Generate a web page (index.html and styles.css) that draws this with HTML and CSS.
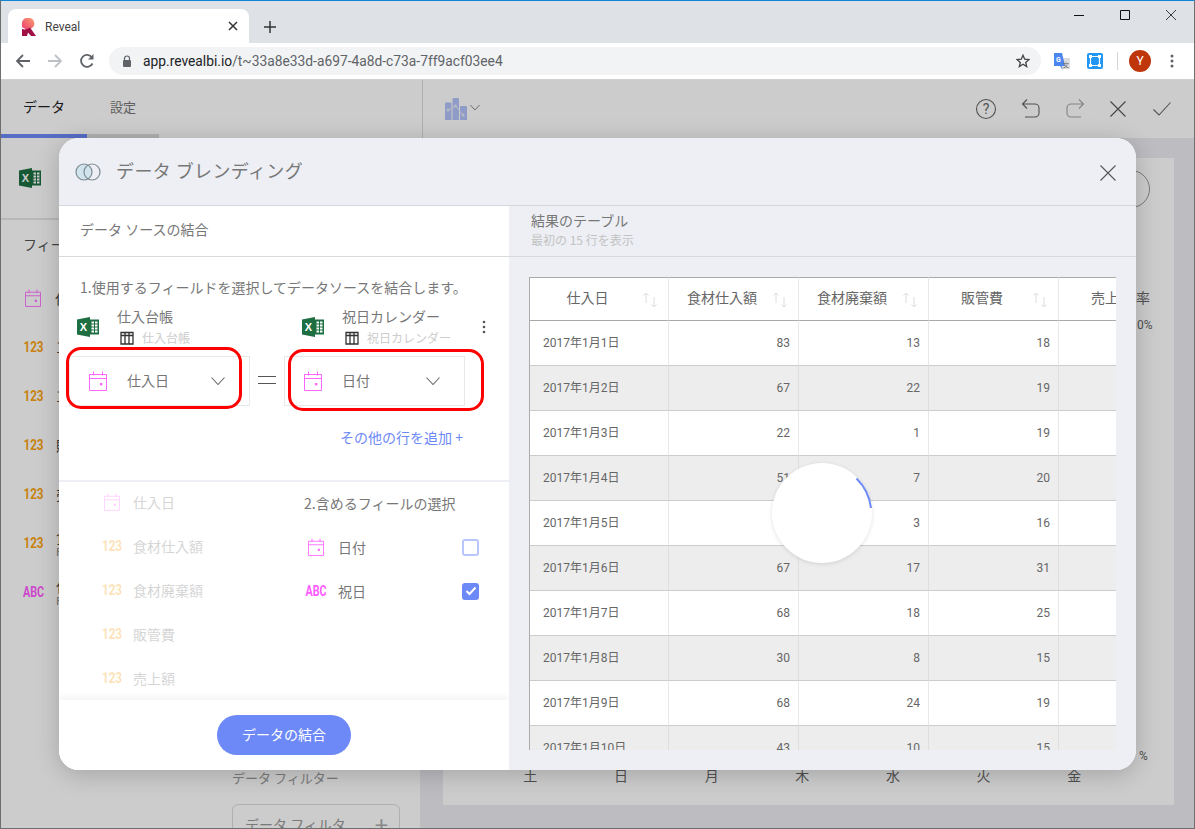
FILE: index.html
```html
<!DOCTYPE html>
<html lang="ja">
<head>
    <meta charset="UTF-8">
    <meta name="viewport" content="width=device-width, initial-scale=1.0">
    <title>Reveal</title>
    <link rel="stylesheet" href="styles.css">
</head>
<body>
    <svg class="sprites" width="0" height="0">
        <defs>
            <linearGradient id="faviconTop" x1="1" y1="0" x2="0" y2="1">
                <stop offset="0" stop-color="#f9a06e"/>
                <stop offset="1" stop-color="#ee3b72"/>
            </linearGradient>
        </defs>
        <symbol id="calendar" viewBox="0 0 18 20">
            <path d="M.5 3.5h17v16H.5zM.5 7.5h17M4.5 .5v4M13.5 .5v4" fill="none" stroke="currentColor"/>
            <rect x="11" y="12" width="2.4" height="2.4" fill="currentColor"/>
        </symbol>
        <symbol id="excel" viewBox="0 0 22 20">
            <path d="M0 2.5 13 0v20L0 17.5z" fill="#1d6f42"/>
            <path d="M13 2.5h9v15h-9z" fill="#1d6f42"/>
            <path d="M14.5 4.5H17v2h-2.5zM18 4.5h2.5v2H18zM14.5 7.5H17v2h-2.5zM18 7.5h2.5v2H18zM14.5 10.5H17v2h-2.5zM18 10.5h2.5v2H18zM14.5 13.500H17v2h-2.5zM18 13.5h2.5v2H18z" fill="#fff"/>
            <text x="6.4" y="14" text-anchor="middle" class="excel-x">X</text>
        </symbol>
        <symbol id="tablegrid" viewBox="0 0 14 14">
            <path d="M1 1.5h12V13H1zM1 4.5h12M5 1.5V13M9 1.5V13" fill="none" stroke="#333" stroke-width="1.3"/>
        </symbol>
        <symbol id="sort" viewBox="0 0 16 16">
            <path d="M4 11V1M1.5 3.5 4 1l2.500 2.500M12 5v10M9.500 12.500 12 15l2.500-2.500" fill="none" stroke="#dedede"/>
        </symbol>
        <symbol id="chevron" viewBox="0 0 14 10">
            <path d="M.5 1.5 7 8.5l6.500-7" fill="none" stroke="#666" stroke-width="1.1"/>
        </symbol>
    </svg>

    <div class="window">
        <div class="tabstrip">
            <div class="tab">
                <svg class="favicon" width="14" height="18" viewBox="0 0 14 18">
                    <path d="M0 9V5a5 5 0 0 1 5-5h2a5.500 5.500 0 0 1 3 10L5 12z" fill="url(#faviconTop)"/>
                    <path d="M0 18v-7c3 1 6 0 8-1.500L14 18H9l-3-3.500L5 18z" fill="#a01046"/>
                </svg>
                <span class="tab-title">Reveal</span>
                <svg class="tab-close" width="10" height="10" viewBox="0 0 10 10">
                    <path d="M1 1l8 8M9 1 1 9" stroke="#333" stroke-width="1.5"/>
                </svg>
            </div>
            <svg class="new-tab" width="12" height="12" viewBox="0 0 12 12">
                <path d="M6 0v12M0 6h12" stroke="#333" stroke-width="1.5"/>
            </svg>
            <div class="window-controls">
                <svg width="10" height="10" viewBox="0 0 10 10"><path d="M0 5.5h10" stroke="#111"/></svg>
                <svg width="10" height="10" viewBox="0 0 10 10"><path d="M.5 .5h9v9h-9z" fill="none" stroke="#111"/></svg>
                <svg width="10" height="10" viewBox="0 0 10 10"><path d="M0 0l10 10M10 0 0 10" stroke="#111" stroke-width=".8"/></svg>
            </div>
        </div>

        <div class="toolbar">
            <svg class="nav-btn" width="16" height="16" viewBox="0 0 16 16">
                <path d="M15 8H2M8 2 2 8l6 6" fill="none" stroke="#5f6368" stroke-width="1.8"/>
            </svg>
            <svg class="nav-btn" width="16" height="16" viewBox="0 0 16 16">
                <path d="M1 8h13M8 2l6 6-6 6" fill="none" stroke="#bdc1c6" stroke-width="1.8"/>
            </svg>
            <svg class="nav-btn" width="16" height="16" viewBox="0 0 16 16">
                <path d="M13.5 10.5A6 6 0 1 1 13 4.5" fill="none" stroke="#5f6368" stroke-width="1.8"/>
                <path d="M14.5 1v5.5H9z" fill="#5f6368"/>
            </svg>
            <div class="omnibox">
                <svg width="10" height="12" viewBox="0 0 10 12">
                    <path d="M2.5 5V3.5a2.500 2.500 0 0 1 5 0V5" fill="none" stroke="#5f6368" stroke-width="1.2"/>
                    <rect x="1" y="5" width="8" height="7" rx="1" fill="#5f6368"/>
                </svg>
                <span class="url">app.revealbi.io<span class="url-path">/t~33a8e33d-a697-4a8d-c73a-7ff9acf03ee4</span></span>
                <svg class="star" width="14" height="14" viewBox="0 0 14 14">
                    <path d="M7 1.2 8.700 5.200l4.300.4-3.300 2.800 1 4.200L7 10.300 3.300 12.600l1-4.200L1 5.600l4.300-.4z" fill="none" stroke="#444" stroke-width="1.3"/>
                </svg>
            </div>
            <svg class="ext-translate" width="16" height="17" viewBox="0 0 16 17">
                <path d="M7 5h9v11H7z" fill="#dcdcdc"/>
                <path d="M0 0h8l3 13H7.500L9 17l-3-4H0z" fill="#4a85f0"/>
                <text x="4.500" y="9" text-anchor="middle" class="ext-g">G</text>
                <text x="12" y="14" text-anchor="middle" class="ext-kanji">文</text>
            </svg>
            <svg class="ext-box" width="16" height="16" viewBox="0 0 16 16">
                <rect width="16" height="16" rx="2" fill="#2196f3"/>
                <path d="M3.500 3.500h9v9h-9z" fill="none" stroke="#fff" stroke-width="1.2"/>
                <path d="M2 2h3v3H2zM11 2h3v3h-3zM2 11h3v3H2zM11 11h3v3h-3z" fill="#fff"/>
            </svg>
            <span class="toolbar-sep"></span>
            <span class="avatar">Y</span>
            <svg class="chrome-menu" width="4" height="14" viewBox="0 0 4 14">
                <circle cx="2" cy="2" r="1.5" fill="#5f6368"/>
                <circle cx="2" cy="7" r="1.5" fill="#5f6368"/>
                <circle cx="2" cy="12" r="1.5" fill="#5f6368"/>
            </svg>
        </div>

        <div class="app">
            <div class="topbar">
                <div class="topbar-tabs">
                    <span class="top-tab top-tab-active">データ</span>
                    <span class="top-tab">設定</span>
                </div>
                <div class="topbar-main">
                    <svg class="viz-icon" width="22" height="22" viewBox="0 0 22 22">
                        <path d="M0 5.500a1 1 0 0 1 1-1h4.500a1 1 0 0 1 1 1V22H0z" fill="#b4c4fb"/>
                        <path d="M7.500 1a1 1 0 0 1 1-1H13a1 1 0 0 1 1 1v21H7.500z" fill="#b4c4fb"/>
                        <path d="M15 9a1 1 0 0 1 1-1h5a1 1 0 0 1 1 1v13h-7z" fill="#b4c4fb"/>
                        <path d="M3 12l7.500-4 7.500 9" fill="none" stroke="#e6e9f6"/>
                        <circle cx="3" cy="12" r="1.500" fill="#e6e9f6"/>
                        <circle cx="10.500" cy="8" r="1.500" fill="#e6e9f6"/>
                        <circle cx="18" cy="17" r="1.500" fill="#e6e9f6"/>
                    </svg>
                    <svg class="viz-chevron" width="10" height="7" viewBox="0 0 14 10"><use href="#chevron"/></svg>
                    <div class="topbar-actions">
                        <svg width="22" height="22" viewBox="0 0 22 22">
                            <circle cx="11" cy="11" r="9.500" fill="none" stroke="#666" stroke-width="1.1"/>
                            <text x="11" y="15.500" text-anchor="middle" class="help-mark">?</text>
                        </svg>
                        <svg width="20" height="20" viewBox="0 0 20 20">
                            <path d="M6 .5 1.500 5 6 9.500M1.500 5H14a4 4 0 0 1 4 4v5a4 4 0 0 1-4 4H4" fill="none" stroke="#666" stroke-width="1.1"/>
                        </svg>
                        <svg width="20" height="20" viewBox="0 0 20 20">
                            <path d="M14 .5 18.500 5 14 9.500M18.500 5H6a4 4 0 0 0-4 4v5a4 4 0 0 0 4 4h10" fill="none" stroke="#a5a5a5" stroke-width="1.1"/>
                        </svg>
                        <svg class="action-close" width="16" height="16" viewBox="0 0 16 16">
                            <path d="M.5 .5l15 15M15.500 .5l-15 15" stroke="#555" stroke-width="1.1"/>
                        </svg>
                        <svg class="action-ok" width="18" height="14" viewBox="0 0 18 14">
                            <path d="M.5 7.500 6 13 17.500 .5" fill="none" stroke="#666" stroke-width="1.1"/>
                        </svg>
                    </div>
                </div>
            </div>

            <div class="workspace">
                <div class="sidebar">
                    <div class="sidebar-source">
                        <svg width="22" height="20"><use href="#excel"/></svg>
                    </div>
                    <div class="sidebar-columns">
                        <div class="field-column">
                            <div class="field-heading">フィールド</div>
                            <div class="side-field"><svg class="cal-icon side-cal" width="16" height="18"><use href="#calendar"/></svg><span>仕入日</span></div>
                            <div class="side-field"><span class="badge-num">123</span><span>1月</span></div>
                            <div class="side-field"><span class="badge-num">123</span><span>1月</span></div>
                            <div class="side-field"><span class="badge-num">123</span><span>販管費</span></div>
                            <div class="side-field"><span class="badge-num">123</span><span>売上額</span></div>
                            <div class="side-field"><span class="badge-num">123</span><span>食材<small>F</small></span></div>
                            <div class="side-field"><span class="badge-abc">ABC</span><span>仕入<small>F</small></span></div>
                        </div>
                        <div class="filter-column">
                            <div class="filter-heading">データ フィルター</div>
                            <div class="filter-box"><span>データ フィルタ</span><b>+</b></div>
                        </div>
                    </div>
                </div>
                <div class="canvas">
                    <div class="chart-card">
                        <span class="chart-circle"></span>
                        <span class="chart-note note-rate">率</span>
                        <span class="chart-note note-top">0%</span>
                        <span class="chart-note note-bottom">%</span>
                        <div class="weekdays">
                            <span>土</span><span>日</span><span>月</span><span>木</span><span>水</span><span>火</span><span>金</span>
                        </div>
                    </div>
                </div>
            </div>

            <div class="overlay"></div>

            <div class="modal">
                <div class="modal-header">
                    <svg width="26" height="18" viewBox="0 0 26 18">
                        <circle cx="9" cy="9" r="8" fill="#cfe4ec" stroke="#7d8b91" stroke-width="1.2"/>
                        <circle cx="17" cy="9" r="8" fill="none" stroke="#7d8b91" stroke-width="1.2"/>
                    </svg>
                    <span class="modal-title">データ ブレンディング</span>
                    <svg class="modal-close" width="16" height="16" viewBox="0 0 16 16">
                        <path d="M.5 .5l15 15M15.500 .5l-15 15" stroke="#555" stroke-width="1.1"/>
                    </svg>
                </div>
                <div class="modal-body">
                    <div class="left-pane">
                        <div class="pane-head">データ ソースの結合</div>
                        <div class="join-area">
                            <p class="join-hint">1.使用するフィールドを選択してデータソースを結合します。</p>
                            <div class="sources">
                                <div class="source">
                                    <svg width="22" height="20"><use href="#excel"/></svg>
                                    <div class="source-text">
                                        <div class="source-name">仕入台帳</div>
                                        <div class="source-sub"><svg width="14" height="14"><use href="#tablegrid"/></svg>仕入台帳</div>
                                    </div>
                                </div>
                                <div class="source source-second">
                                    <svg width="22" height="20"><use href="#excel"/></svg>
                                    <div class="source-text">
                                        <div class="source-name">祝日カレンダー</div>
                                        <div class="source-sub"><svg width="14" height="14"><use href="#tablegrid"/></svg>祝日カレンダー</div>
                                    </div>
                                </div>
                                <svg class="more-dots" width="4" height="14" viewBox="0 0 4 14">
                                    <circle cx="2" cy="2" r="1.3" fill="#555"/>
                                    <circle cx="2" cy="7" r="1.3" fill="#555"/>
                                    <circle cx="2" cy="12" r="1.3" fill="#555"/>
                                </svg>
                            </div>
                            <div class="selectors">
                                <div class="selector">
                                    <svg class="cal-icon" width="18" height="20"><use href="#calendar"/></svg>
                                    <span class="selector-label">仕入日</span>
                                    <svg width="14" height="10"><use href="#chevron"/></svg>
                                    <span class="callout callout-left"></span>
                                </div>
                                <span class="equals"></span>
                                <div class="selector">
                                    <svg class="cal-icon" width="18" height="20"><use href="#calendar"/></svg>
                                    <span class="selector-label">日付</span>
                                    <svg width="14" height="10"><use href="#chevron"/></svg>
                                    <span class="callout callout-right"></span>
                                </div>
                            </div>
                            <div class="add-row">その他の行を追加 +</div>
                        </div>
                        <div class="field-lists">
                            <div class="field-list field-list-faded">
                                <div class="field-row"><span class="type-cell"><svg class="cal-icon" width="16" height="18"><use href="#calendar"/></svg></span>仕入日</div>
                                <div class="field-row"><span class="type-cell badge-num">123</span>食材仕入額</div>
                                <div class="field-row"><span class="type-cell badge-num">123</span>食材廃棄額</div>
                                <div class="field-row"><span class="type-cell badge-num">123</span>販管費</div>
                                <div class="field-row"><span class="type-cell badge-num">123</span>売上額</div>
                            </div>
                            <div class="field-list field-list-right">
                                <div class="field-row">2.含めるフィールの選択</div>
                                <div class="field-row"><span class="type-cell"><svg class="cal-icon" width="16" height="18"><use href="#calendar"/></svg></span>日付<span class="checkbox"></span></div>
                                <div class="field-row">
                                    <span class="type-cell badge-abc">ABC</span>祝日
                                    <span class="checkbox checkbox-on">
                                        <svg width="12" height="10" viewBox="0 0 12 10"><path d="M1.5 5 4.500 8l6-6.500" fill="none" stroke="#fff" stroke-width="2"/></svg>
                                    </span>
                                </div>
                            </div>
                        </div>
                        <div class="left-footer">
                            <button class="merge-btn" type="button">データの結合</button>
                        </div>
                    </div>

                    <div class="right-pane">
                        <div class="pane-head pane-head-right">
                            <div class="result-title">結果のテーブル</div>
                            <div class="result-sub">最初の 15 行を表示</div>
                        </div>
                        <div class="table-wrap">
                            <table class="result-table">
                                <thead>
                                    <tr>
                                        <th class="col-date"><div class="th-inner"><span>仕入日</span><svg width="16" height="16"><use href="#sort"/></svg></div></th>
                                        <th><div class="th-inner"><span>食材仕入額</span><svg width="16" height="16"><use href="#sort"/></svg></div></th>
                                        <th><div class="th-inner"><span>食材廃棄額</span><svg width="16" height="16"><use href="#sort"/></svg></div></th>
                                        <th><div class="th-inner"><span>販管費</span><svg width="16" height="16"><use href="#sort"/></svg></div></th>
                                        <th><div class="th-inner"><span>売上額</span><svg width="16" height="16"><use href="#sort"/></svg></div></th>
                                    </tr>
                                </thead>
                                <tbody>
                                    <tr><td>2017年1月1日</td><td>83</td><td>13</td><td>18</td><td></td></tr>
                                    <tr><td>2017年1月2日</td><td>67</td><td>22</td><td>19</td><td></td></tr>
                                    <tr><td>2017年1月3日</td><td>22</td><td>1</td><td>19</td><td></td></tr>
                                    <tr><td>2017年1月4日</td><td>51</td><td>7</td><td>20</td><td></td></tr>
                                    <tr><td>2017年1月5日</td><td>45</td><td>3</td><td>16</td><td></td></tr>
                                    <tr><td>2017年1月6日</td><td>67</td><td>17</td><td>31</td><td></td></tr>
                                    <tr><td>2017年1月7日</td><td>68</td><td>18</td><td>25</td><td></td></tr>
                                    <tr><td>2017年1月8日</td><td>30</td><td>8</td><td>15</td><td></td></tr>
                                    <tr><td>2017年1月9日</td><td>68</td><td>24</td><td>19</td><td></td></tr>
                                    <tr><td>2017年1月10日</td><td>43</td><td>10</td><td>15</td><td></td></tr>
                                </tbody>
                            </table>
                        </div>
                        <div class="spinner">
                            <svg width="100" height="100" viewBox="0 0 100 100">
                                <path d="M84.500 15.500A49 49 0 0 1 99 45" fill="none" stroke="#6d89f7" stroke-width="2"/>
                            </svg>
                        </div>
                    </div>
                </div>
            </div>
        </div>
    </div>
</body>
</html>
```
FILE: styles.css
```css
* {
    box-sizing: border-box;
}

html, body {
    margin: 0;
    height: 100%;
}

body {
    font-family: "Noto Sans CJK JP", Roboto, sans-serif;
    color: #666;
    overflow: hidden;
}

.sprites {
    position: absolute;
}

.excel-x {
    font: bold 11px "Liberation Sans", sans-serif;
    fill: #fff;
}

.window {
    width: 1195px;
    height: 829px;
    border: 1px solid #6e6e6e;
    border-top-color: #0f85d8;
    display: flex;
    flex-direction: column;
    background: #fff;
}

/* browser chrome */
.tabstrip {
    height: 42px;
    flex: none;
    background: #dee1e6;
    display: flex;
    align-items: flex-end;
    padding-left: 7px;
    position: relative;
}

.tab {
    width: 241px;
    height: 34px;
    background: #fff;
    border-radius: 8px 8px 0 0;
    display: flex;
    align-items: center;
    padding: 0 11px 0 14px;
}

.favicon {
    flex: none;
    margin-top: 2px;
}

.tab-title {
    flex: 1;
    margin: 2px 0 0 9px;
    font: 12px Roboto, sans-serif;
    color: #444;
}

.new-tab {
    margin: 0 0 10px 15px;
}

.window-controls {
    margin-left: auto;
    align-self: flex-start;
    display: flex;
    gap: 36px;
    padding: 9px 18px 0 0;
}

.toolbar {
    height: 37px;
    flex: none;
    background: #fff;
    border-bottom: 1px solid #d0d0d0;
    display: flex;
    align-items: center;
    padding-left: 14px;
}

.nav-btn {
    margin-right: 16px;
}

.omnibox {
    width: 932px;
    height: 28px;
    margin-left: -2px;
    border-radius: 14px;
    background: #f1f3f4;
    display: flex;
    align-items: center;
    padding: 0 11px 0 13px;
}

.url {
    margin-left: 11px;
    font: 13.8px Roboto, sans-serif;
    color: #202124;
}

.url-path {
    color: #5f6368;
}

.star {
    margin-left: auto;
}

.ext-translate {
    margin-left: 13px;
}

.ext-g {
    font: bold 7px Roboto, sans-serif;
    fill: #fff;
}

.ext-kanji {
    font: 6px "Noto Sans CJK JP", sans-serif;
    fill: #666;
}

.ext-box {
    margin-left: 17px;
}

.toolbar-sep {
    width: 1px;
    height: 18px;
    margin-left: 14px;
    background: #d5d5d5;
}

.avatar {
    width: 22px;
    height: 22px;
    margin-left: 11px;
    border-radius: 50%;
    background: #bf360c;
    color: #fff;
    font: 12px/22px Roboto, sans-serif;
    text-align: center;
}

.chrome-menu {
    margin-left: 19px;
}

/* app behind the dialog */
.app {
    flex: 1;
    position: relative;
    overflow: hidden;
    display: flex;
    flex-direction: column;
    background: #fff;
}

.overlay {
    position: absolute;
    inset: 0;
    background: rgba(0, 0, 0, 0.2);
}

.topbar {
    height: 58px;
    flex: none;
    display: flex;
    background: #fff;
}

.topbar-tabs {
    width: 421px;
    display: flex;
    position: relative;
    border-bottom: 3px solid transparent;
    padding-left: 22px;
    gap: 45px;
    align-items: center;
    font-size: 14px;
}

.topbar-tabs::after {
    content: "";
    position: absolute;
    left: 0;
    bottom: -3px;
    width: 158px;
    height: 4px;
    background: linear-gradient(to right, #6d89f7 86px, #dcdcdc 86px);
}

.top-tab {
    color: #777;
    font-size: 13px;
    padding-bottom: 3px;
}

.top-tab-active {
    color: #222;
    font-size: 14px;
}

.topbar-main {
    flex: 1;
    border-left: 1px solid #dcdcdc;
    display: flex;
    align-items: center;
    padding-left: 22px;
}

.viz-chevron {
    margin: -4px 0 0 3px;
}

.topbar-actions {
    margin-left: auto;
    display: flex;
    align-items: center;
    gap: 24px;
    padding-right: 23px;
}

.action-close {
    margin-left: 1px;
}

.action-ok {
    margin-left: 3px;
}

.help-mark {
    font: 14px Roboto, sans-serif;
    fill: #666;
}

.workspace {
    flex: 1;
    display: flex;
    min-height: 0;
}

.sidebar {
    width: 420px;
    flex: none;
    background: #fff;
    border-right: 1px solid #eee;
}

.sidebar-source {
    height: 82px;
    border-bottom: 2px solid #e6e6e6;
    padding: 30px 0 0 18px;
}

.sidebar-columns {
    display: flex;
}

.field-column {
    width: 221px;
    padding-left: 22px;
}

.field-heading {
    height: 53px;
    padding-top: 14px;
    font-size: 14px;
    color: #555;
}

.side-field {
    height: 49px;
    display: flex;
    align-items: center;
    gap: 12px;
    font-size: 14px;
    color: #444;
}

.side-cal {
    margin: 0 2px 0 2px;
}

.side-field small {
    display: block;
    font-size: 11px;
    line-height: 11px;
    color: #888;
}

.side-field span:last-child {
    line-height: 18px;
}

.filter-column {
    padding: 548px 0 0 10px;
}

.filter-heading {
    font-size: 13px;
    color: #999;
}

.filter-box {
    width: 168px;
    height: 46px;
    margin-top: 17px;
    border: 1px solid #ddd;
    border-radius: 6px;
    padding: 9px 11px 0 12px;
    display: flex;
    justify-content: space-between;
    font-size: 14px;
    color: #999;
    white-space: nowrap;
}

.filter-box b {
    font-size: 24px;
    line-height: 20px;
    font-weight: normal;
    color: #aaa;
}

.canvas {
    flex: 1;
    background: #ebecf2;
    padding: 20px 20px 23px 22px;
}

.chart-card {
    height: 100%;
    background: #fff;
    position: relative;
    display: flex;
    flex-direction: column;
    justify-content: flex-end;
    padding: 0 0 20px 42px;
}

.chart-circle {
    position: absolute;
    left: 669px;
    top: 12px;
    width: 38px;
    height: 38px;
    border: 1px solid #999;
    border-radius: 50%;
}

.chart-note {
    position: absolute;
    font: 12px Roboto, "Noto Sans CJK JP", sans-serif;
    color: #666;
}

.note-rate {
    left: 693px;
    top: 129px;
    font-size: 14px;
}

.note-top {
    left: 694px;
    top: 160px;
}

.note-bottom {
    left: 696px;
    top: 591px;
}

.weekdays {
    display: grid;
    grid-template-columns: repeat(7, 90.67px);
    font-size: 14px;
    text-align: center;
    color: #666;
    line-height: 20px;
}

/* dialog */
.modal {
    position: absolute;
    left: 58px;
    top: 58px;
    width: 1077px;
    height: 632px;
    border-radius: 20px;
    overflow: hidden;
    background: #fff;
    display: flex;
    flex-direction: column;
    box-shadow: 0 4px 24px rgba(0, 0, 0, 0.2);
}

.modal-header {
    height: 68px;
    flex: none;
    background: #edeff4;
    border-bottom: 1px solid #d5d7dc;
    display: flex;
    align-items: center;
    padding: 0 20px 0 16px;
}

.modal-title {
    margin: 0 0 3px 15px;
    font-size: 18px;
    letter-spacing: 0.4px;
    color: #777;
}

.modal-close {
    margin-left: auto;
    margin-top: 2px;
}

.modal-body {
    flex: 1;
    display: flex;
    min-height: 0;
}

.left-pane {
    width: 450px;
    flex: none;
    display: flex;
    flex-direction: column;
    background: #fff;
}

.pane-head {
    height: 51px;
    flex: none;
    border-bottom: 1px solid #d9dade;
    padding: 12px 0 0 21px;
    font-size: 14px;
    line-height: 22px;
    color: #777;
}

.join-area {
    height: 225px;
    flex: none;
    border-bottom: 2px solid #edeff4;
}

.join-hint {
    margin: 20px 0 0 21px;
    font-size: 14px;
    line-height: 20px;
    color: #777;
}

.sources {
    display: flex;
    align-items: center;
    height: 40px;
    margin-top: 10px;
    padding-left: 18px;
}

.source {
    width: 225px;
    flex: none;
    display: flex;
    align-items: center;
}

.source-second {
    width: 180px;
}

.source-text {
    margin-left: 18px;
    white-space: nowrap;
}

.source-name {
    font-size: 14px;
    line-height: 20px;
    color: #777;
}

.source-sub {
    display: flex;
    align-items: center;
    gap: 8px;
    margin: 2px 0 0 3px;
    font-size: 12px;
    line-height: 20px;
    color: #ccc;
}

.selectors {
    display: flex;
    margin-top: 9px;
    padding-left: 10px;
}

.selector {
    width: 181px;
    height: 50px;
    border: 1px solid #e8e8e8;
    display: flex;
    align-items: center;
    padding: 0 24px 0 19px;
    position: relative;
}

.selector-label {
    flex: 1;
    margin: 0 0 3px 20px;
    font-size: 14px;
    color: #777;
}

.cal-icon {
    color: #ff66ff;
    flex: none;
}

.equals {
    width: 18px;
    height: 8px;
    margin: 20px 8px 0;
    border-top: 1px solid #555;
    border-bottom: 1px solid #555;
}

/* red marks added on top of the screenshot */
.callout {
    position: absolute;
    border: 3px solid #f00;
    border-radius: 15px;
}

.callout-left {
    left: -4px;
    top: -10px;
    width: 176px;
    height: 62px;
}

.callout-right {
    left: 3px;
    top: -8px;
    width: 196px;
    height: 62px;
}

.add-row {
    margin-top: 21px;
    padding-right: 46px;
    text-align: right;
    font-size: 14px;
    line-height: 20px;
    color: #6d89f7;
}

.field-lists {
    flex: 1;
    min-height: 0;
    overflow: hidden;
    display: flex;
}

.field-list {
    font-size: 14px;
    color: #777;
}

.field-list-faded {
    width: 245px;
    margin-top: -2px;
    padding-left: 42px;
    opacity: 0.3;
}

.field-list-right {
    flex: 1;
    margin-top: -1px;
    padding-right: 30px;
}

.field-row {
    height: 44px;
    display: flex;
    align-items: center;
}

.type-cell {
    width: 22px;
    flex: none;
    display: flex;
    justify-content: center;
    margin-right: 10px;
}

.field-list-right .type-cell {
    width: 24px;
}

/* these labels are narrow and tall in the app, so squeeze the font */
.badge-num, .badge-abc {
    display: flex;
    justify-content: center;
    white-space: nowrap;
    font: bold 15px Roboto, sans-serif;
    transform: scaleX(0.78);
}

.badge-num {
    color: #faa312;
}

.badge-abc {
    color: #ff5cff;
    transform: scaleX(0.72);
}

.side-field .badge-num, .side-field .badge-abc {
    width: 21px;
    flex: none;
}

.checkbox {
    width: 17px;
    height: 17px;
    margin-left: auto;
    border: 2px solid #b8c6fb;
    border-radius: 3px;
    display: flex;
    align-items: center;
    justify-content: center;
}

.checkbox-on {
    background: #6d89f7;
    border-color: #6d89f7;
}

.left-footer {
    height: 70px;
    flex: none;
    display: flex;
    align-items: center;
    justify-content: center;
    background: #fff;
    box-shadow: 0 -3px 8px rgba(0, 0, 0, 0.05);
    position: relative;
}

.merge-btn {
    width: 134px;
    height: 40px;
    border: none;
    border-radius: 20px;
    background: #6d89f7;
    color: #fff;
    padding-bottom: 3px;
    font: 14px "Noto Sans CJK JP", sans-serif;
}

.right-pane {
    flex: 1;
    min-width: 0;
    background: #edeff4;
    position: relative;
}

.pane-head-right {
    padding: 4px 0 0 22px;
}

.result-title {
    font-size: 14px;
    line-height: 20px;
    color: #777;
}

.result-sub {
    font-size: 12px;
    line-height: 19px;
    color: #c2c2c2;
}

.table-wrap {
    width: 587px;
    height: 473px;
    margin: 20px 0 0 20px;
    overflow: hidden;
}

.result-table {
    width: 660px;
    table-layout: fixed;
    border-collapse: separate;
    border-spacing: 0;
    border-left: 1px solid #aaa;
    background: #fff;
}

.result-table th {
    width: 130px;
    height: 44px;
    padding: 0;
    border-top: 1px solid #aaa;
    border-bottom: 1px solid #aaa;
    border-right: 1px solid #e8e8e8;
    font-size: 14px;
    font-weight: normal;
    color: #666;
}

.result-table th.col-date {
    width: 139px;
}

.th-inner {
    display: flex;
    align-items: center;
    padding: 0 10px 0 3px;
}

.th-inner span {
    flex: 1;
    padding-bottom: 4px;
    text-align: center;
    white-space: nowrap;
}

.th-inner svg {
    flex: none;
    margin-top: 1px;
}

.result-table td {
    height: 45px;
    padding: 0 8px 0 0;
    border-bottom: 1px solid #ccc;
    border-right: 1px solid #e8e8e8;
    font: 12px/16px Roboto, "Noto Sans CJK JP", sans-serif;
    color: #666;
    text-align: right;
}

.result-table td:first-child {
    padding: 0 0 0 13px;
    text-align: left;
}

.result-table tbody tr:nth-child(even) td {
    background: #ededed;
    border-right-color: #dedede;
}

.spinner {
    position: absolute;
    left: 263px;
    top: 257px;
    width: 100px;
    height: 100px;
    border-radius: 50%;
    background: #fff;
    box-shadow: 0 1px 4px rgba(0, 0, 0, 0.12);
}

.spinner svg {
    display: block;
}
```
